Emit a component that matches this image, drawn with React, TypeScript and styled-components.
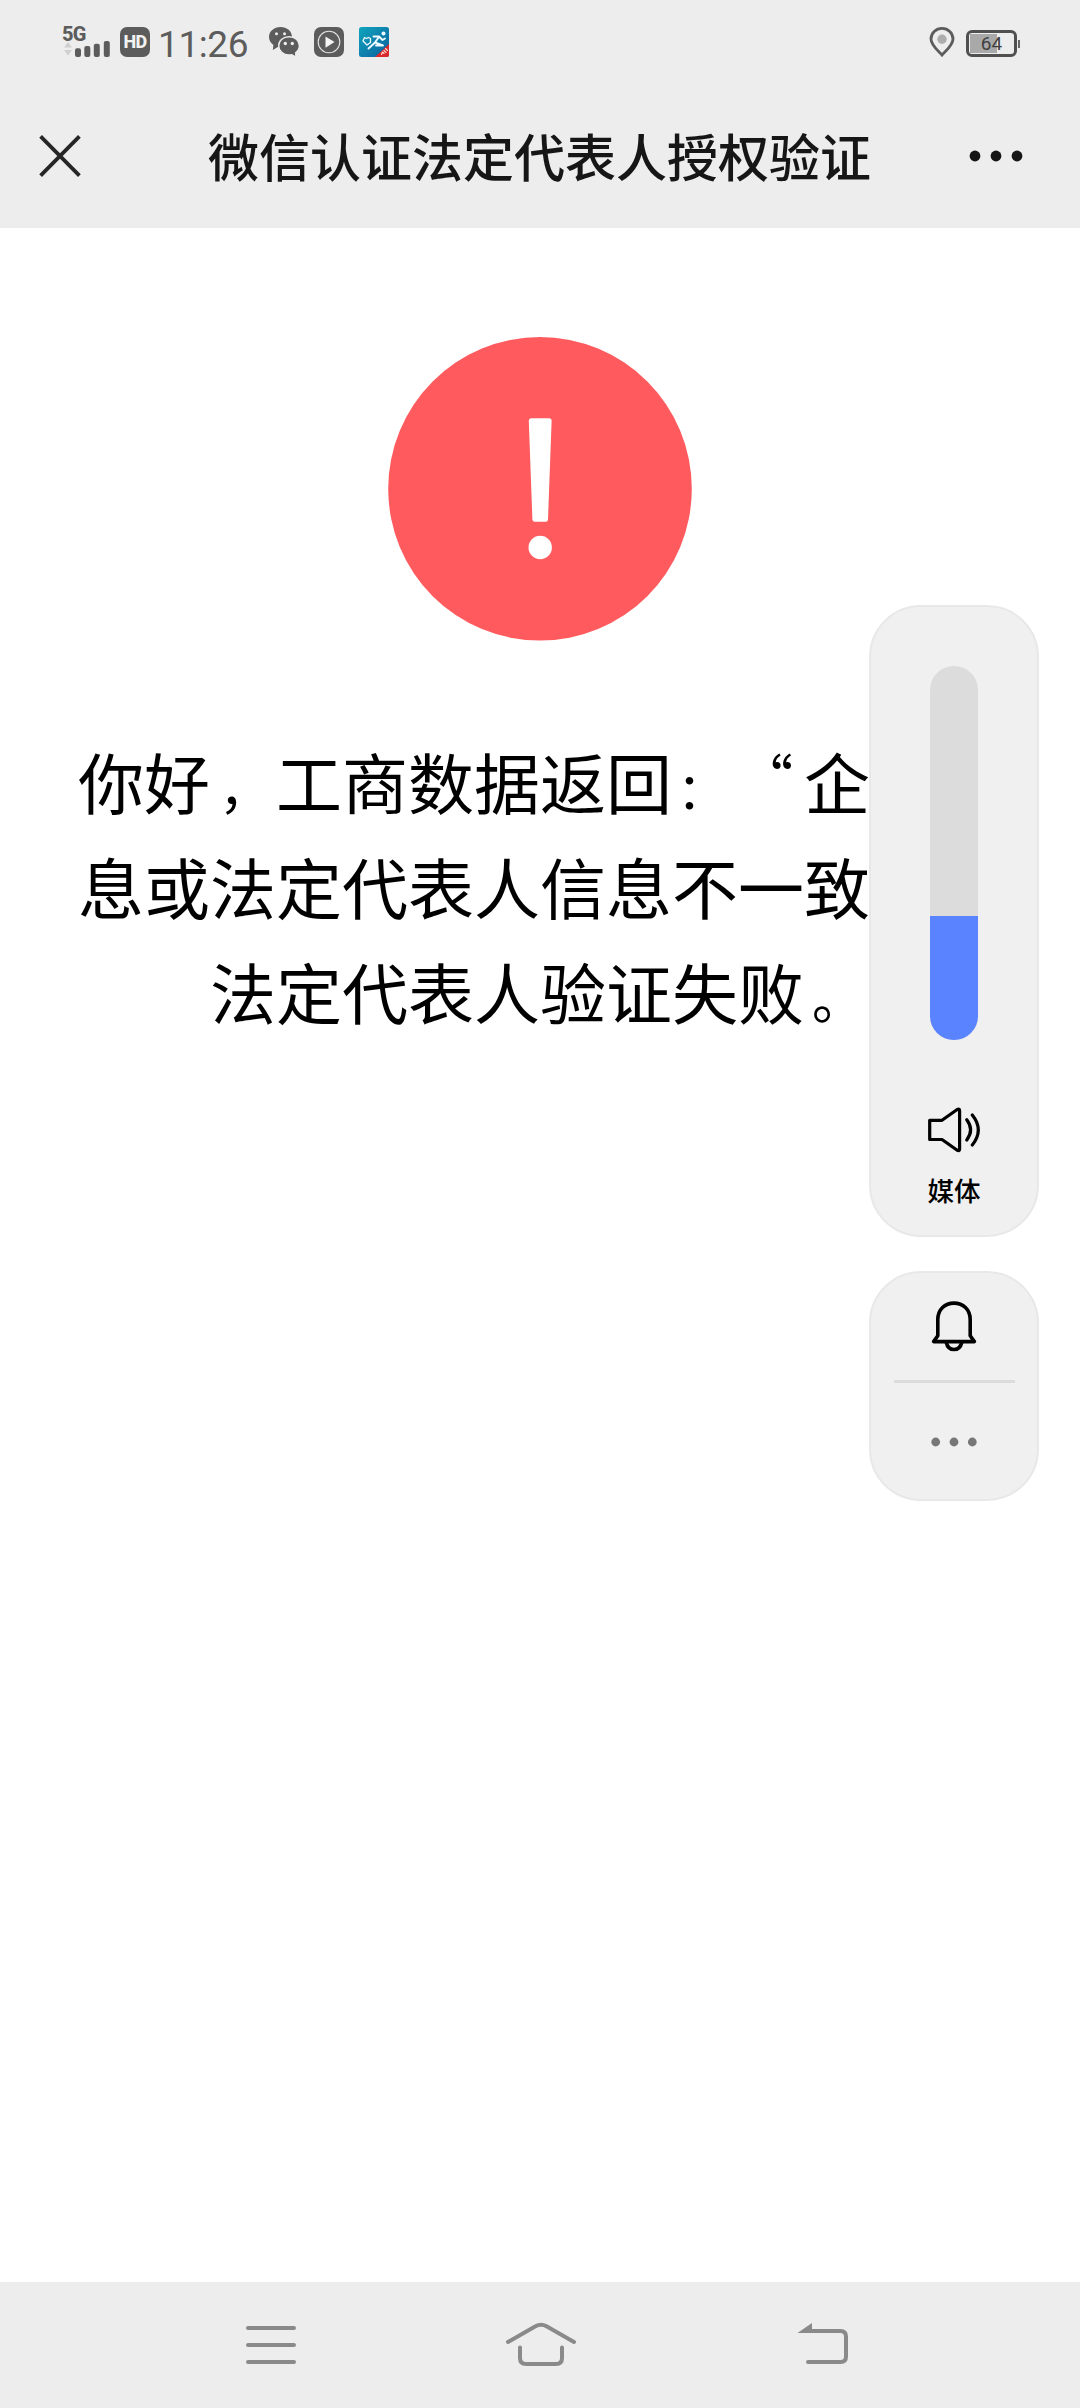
import React from 'react';
import styled, { createGlobalStyle } from 'styled-components';

const cjk = '"Noto Sans CJK SC", "Noto Sans", sans-serif';
const ink = '#5c5c5c';

const GlobalStyle = createGlobalStyle`
  * { box-sizing: border-box; }
  body { margin: 0; background: #fff; }
  svg { display: block; flex: none; }
`;

const Screen = styled.div`
  position: relative;
  display: flex;
  flex-direction: column;
  width: 1080px;
  height: 2408px;
  overflow: hidden;
  background: #fff;
  font-family: ${cjk};
`;

const StatusBar = styled.div`
  display: flex;
  justify-content: space-between;
  align-items: flex-start;
  height: 85px;
  padding: 27px 60px 0 62px;
  background: #ededed;
  color: ${ink};
`;

const StatusGroup = styled.div<{ $gap: number }>`
  display: flex;
  align-items: flex-start;
  gap: ${(p) => p.$gap}px;
  height: 30px;
`;

const Signal = styled.div`
  display: flex;
  flex-direction: column;
  width: 48px;
  height: 30px;
`;

const NetworkLabel = styled.span`
  height: 14px;
  font: 800 20px/15px Roboto, sans-serif;
  letter-spacing: -0.8px;
`;

const HdBadge = styled.div`
  display: flex;
  align-items: center;
  justify-content: center;
  width: 30px;
  height: 30px;
  margin-left: 10px;
  border-radius: 7px;
  background: ${ink};
  color: #f2f2f2;
  font: 800 18px/30px Roboto, sans-serif;
  letter-spacing: -0.6px;
`;

const Clock = styled.span`
  width: 94px;
  margin-left: 8px;
  font: 400 37px/36px Roboto, sans-serif;
  letter-spacing: -0.4px;
  white-space: nowrap;
`;

const StatusApps = styled.div`
  display: flex;
  gap: 15px;
  margin-left: 17px;
`;

const Battery = styled.div`
  display: flex;
  align-items: center;
  gap: 1px;
  margin-top: 3px;
`;

const BatteryCell = styled.div`
  display: flex;
  align-items: center;
  justify-content: center;
  width: 51px;
  height: 27px;
  border: 3px solid #505050;
  border-radius: 6px;
  background: linear-gradient(90deg, #a9a9a9 27px, transparent 27px) 1px 1px / 43px 19px no-repeat;
  color: #404040;
  font: 400 19px/21px Roboto, sans-serif;
`;

const BatteryTip = styled.div`
  width: 2px;
  height: 8px;
  background: #666;
`;

const Header = styled.header`
  display: grid;
  grid-template-columns: 170px 1fr 54px;
  align-items: center;
  height: 143px;
  padding: 0 57px 1px 38px;
  background: #ededed;
`;

const Title = styled.h1`
  margin: 0 0 3px;
  color: #161616;
  font-size: 51px;
  font-weight: 500;
  line-height: 76px;
  white-space: nowrap;
`;

const Content = styled.main`
  display: flex;
  flex: 1;
  flex-direction: column;
  align-items: center;
  padding: 109px 78px 0;
`;

const Message = styled.div`
  width: 924px;
  margin-top: 87px;
  color: #000;
  font-size: 66px;
  line-height: 105px;
`;

const MessageLine = styled.p<{ $centered?: boolean }>`
  height: 105px;
  margin: 0;
  text-align: ${(p) => (p.$centered ? 'center' : 'left')};
  white-space: nowrap;
`;

const Punct = styled.span<{ $size: number; $indent: number; $raise?: number }>`
  display: inline-block;
  width: 66px;
  font-size: ${(p) => p.$size}px;
  line-height: 60px;
  text-align: left;
  text-indent: ${(p) => p.$indent}px;
  text-spacing-trim: space-all;
  vertical-align: ${(p) => p.$raise ?? 0}px;
`;

const VolumeOverlay = styled.aside`
  position: absolute;
  top: 605px;
  right: 41px;
  display: flex;
  flex-direction: column;
  gap: 34px;
  width: 170px;
`;

const Panel = styled.section<{ $height: number; $top: number }>`
  display: flex;
  flex-direction: column;
  align-items: center;
  height: ${(p) => p.$height}px;
  padding-top: ${(p) => p.$top}px;
  border: 2px solid #e8e8e8;
  border-radius: 52px;
  background: #f0f0f0;
`;

const Track = styled.div`
  display: flex;
  flex-direction: column;
  justify-content: flex-end;
  width: 48px;
  height: 374px;
  margin-bottom: 67px;
  overflow: hidden;
  border-radius: 24px;
  background: #dcdcdc;
`;

const Level = styled.div`
  height: 124px;
  background: #5a84ff;
`;

const StreamLabel = styled.span`
  margin-top: 17px;
  color: #000;
  font-size: 26.5px;
  font-weight: 500;
  line-height: 40px;
`;

const Divider = styled.div`
  width: 121px;
  height: 3px;
  margin: 28px 0 52px;
  background: #dcdcdc;
`;

const NavBar = styled.nav`
  display: grid;
  grid-template-columns: 260px 293px 54px;
  height: 126px;
  padding: 38px 0 0 244px;
  background: #ededed;
`;

function SignalBars() {
  return (
    <svg width="48" height="16" viewBox="0 0 48 16">
      <path d="M2 6.5 6 1l4 5.5zM2 9l4 5.5L10 9z" fill="#cfcfcf" />
      <g fill={ink}>
        <rect x="13" y="7.3" width="6" height="8.7" rx="2" />
        <rect x="22.3" y="5" width="6" height="11" rx="2" />
        <rect x="31.8" y="2.7" width="6" height="13.3" rx="2" />
        <rect x="41.8" y="0" width="6" height="16" rx="2" />
      </g>
    </svg>
  );
}

function WeChatIcon() {
  return (
    <svg width="30" height="30" viewBox="0 0 30 30">
      <path d="M11.5 0C5 0 0 4.400 0 10c0 3.300 1.700 6 4.400 7.900L3.800 23l5-3.100c.9.200 1.800.3 2.700.3C18 20.200 23 15.700 23 10S18 0 11.500 0z" fill={ink} />
      <path d="M20 9.700c5.800 0 10.400 4 10.400 9.100 0 2.900-1.500 5.300-3.800 7l.4 4.200-4.200-2.300c-.9.200-1.800.3-2.800.3-5.700 0-10.300-4.100-10.300-9.200 0-5.100 4.600-9.100 10.300-9.100z" fill={ink} stroke="#ededed" strokeWidth="1.400" />
      <g fill="#ededed">
        <circle cx="7.500" cy="6.800" r="1.500" />
        <circle cx="15.500" cy="6.800" r="1.500" />
        <circle cx="16.300" cy="16.500" r="1.700" />
        <circle cx="23.300" cy="16.500" r="1.700" />
      </g>
    </svg>
  );
}

function PlayerIcon() {
  return (
    <svg width="30" height="30" viewBox="0 0 30 30">
      <rect width="30" height="30" rx="7" fill={ink} />
      <circle cx="15" cy="15" r="10.800" fill="none" stroke="#e4e4e4" strokeWidth="1.100" />
      <path d="M11.500 9.500v11.200l9-5.600z" fill="#f4f4f4" />
    </svg>
  );
}

function RunnerIcon() {
  return (
    <svg width="30" height="30" viewBox="0 0 30 30">
      <defs>
        <linearGradient id="sky" x1="0" y1="0" x2="1" y2="1">
          <stop offset="0" stopColor="#10a5bd" />
          <stop offset="1" stopColor="#0b5f9e" />
        </linearGradient>
        <clipPath id="tile"><rect width="30" height="30" rx="2.500" /></clipPath>
      </defs>
      <g clipPath="url(#tile)">
        <rect width="30" height="30" fill="url(#sky)" />
        <path d="M30 17v13H16z" fill="#d8292c" />
        <g fill="none" stroke="#eefaff" strokeLinecap="round" strokeLinejoin="round">
          <path d="M14.500 9.500h5.500l3.500 3.500 2.500-1.500M20 10l-4.500 6-6 5.500M16 15.500l8 3h-7" strokeWidth="1.900" />
          <path d="M11.500 11.500l-2-1-2 1-2-1L4 14l4 4 3.500-2.500z" strokeWidth="1.300" />
          <path d="M22.500 27.500l1-2.500 1.500 1.500m0-3 2 2m-.5-4 2 2" stroke="#ffd9cf" strokeWidth="1.100" />
        </g>
        <circle cx="24.500" cy="6.500" r="2" fill="#eefaff" />
      </g>
    </svg>
  );
}

function LocationIcon() {
  return (
    <svg width="26" height="30" viewBox="0 0 26 30">
      <path d="M13 28C10 24.500 2 18.500 2 12a11 10.600 0 0 1 22 0c0 6.500-8 12.500-11 16z" fill="none" stroke={ink} strokeWidth="2.800" />
      <circle cx="13" cy="12.300" r="4.700" fill="#adadad" />
    </svg>
  );
}

function CloseIcon() {
  return (
    <svg width="44" height="44" viewBox="0 0 44 44">
      <path d="M2.600 2.400 41.400 41.600M41.400 2.400 2.600 41.600" stroke="#262626" strokeWidth="3.800" />
    </svg>
  );
}

function Dots({ width, pitch, r, color }: { width: number; pitch: number; r: number; color: string }) {
  return (
    <svg width={width} height="14" viewBox={`${-width / 2} -7 ${width} 14`} fill={color}>
      {[-pitch, 0, pitch].map((cx) => <circle key={cx} cx={cx} cy="0" r={r} />)}
    </svg>
  );
}

function WarningIcon() {
  return (
    <svg width="304" height="304" viewBox="0 0 304 304">
      <circle cx="152" cy="151.800" r="151.800" fill="#ff5b5e" />
      <path d="M143.500 81.300h17.500q2.700 0 2.600 3l-3.600 98.200q-.1 2.300-2.300 2.300h-11q-2.200 0-2.300-2.300L140.800 84.300q-.1-3 2.700-3z" fill="#fff" />
      <circle cx="152.200" cy="210.500" r="11.700" fill="#fff" />
    </svg>
  );
}

function SpeakerIcon() {
  return (
    <svg width="54" height="46" viewBox="0 0 54 46" fill="none" stroke="#000" strokeWidth="3.200" strokeLinecap="round" strokeLinejoin="round">
      <path d="M2.700 13.300H15L30.200 2.500q2.400-1 2.400 1v38.800q0 2-2.400 1L15 32.500H2.700z" />
      <path d="M39.800 12.800q7.600 10 0 20.200M45.300 8q12 15 0 30" />
    </svg>
  );
}

function BellIcon() {
  return (
    <svg width="46" height="51" viewBox="0 0 46 51" fill="none" stroke="#000" strokeWidth="3.600" strokeLinejoin="round">
      <path d="M6.800 18.500C6.800 8.500 14 2.100 23 2.100s16.200 6.400 16.200 16.400v16.200l4.200 5.900H2.600l4.200-5.900z" />
      <path d="M15.300 41.500c1 4.600 4.200 7 7.700 7s6.700-2.400 7.700-7" />
    </svg>
  );
}

const navStroke = { fill: 'none', stroke: '#8a8a8a', strokeWidth: 4, strokeLinecap: 'round' as const };

function MenuIcon() {
  return (
    <svg width="54" height="48" viewBox="0 0 54 48" {...navStroke}>
      <path d="M4 8h46M4 25h46M4 42h46" />
    </svg>
  );
}

function HomeIcon() {
  return (
    <svg width="74" height="48" viewBox="0 0 74 48" {...navStroke}>
      <path d="M4 22 31.500 6.300q5.600-3 11 0L70 22" />
      <path d="M16 27.500V38q0 6 6 6h30q6 0 6-6V27.500" />
    </svg>
  );
}

function BackIcon() {
  return (
    <svg width="54" height="48" viewBox="0 0 54 48" {...navStroke}>
      <path d="M10 11h33.500q5.500 0 5.500 5.500v20q0 5.500-5.500 5.500H11" />
      <path d="M.5 13 15 3v10z" fill="#8a8a8a" stroke="none" />
    </svg>
  );
}

export default function App() {
  return (
    <Screen>
      <GlobalStyle />
      <StatusBar>
        <StatusGroup $gap={0}>
          <Signal>
            <NetworkLabel>5G</NetworkLabel>
            <SignalBars />
          </Signal>
          <HdBadge>HD</HdBadge>
          <Clock>11:26</Clock>
          <StatusApps>
            <WeChatIcon />
            <PlayerIcon />
            <RunnerIcon />
          </StatusApps>
        </StatusGroup>
        <StatusGroup $gap={11}>
          <LocationIcon />
          <Battery>
            <BatteryCell>64</BatteryCell>
            <BatteryTip />
          </Battery>
        </StatusGroup>
      </StatusBar>
      <Header>
        <CloseIcon />
        <Title>微信认证法定代表人授权验证</Title>
        <Dots width={54} pitch={21} r={5.4} color="#161616" />
      </Header>
      <Content>
        <WarningIcon />
        <Message>
          <MessageLine>
            你好<Punct $size={52} $indent={9}>，</Punct>工商数据返回<Punct $size={50} $indent={5}>：</Punct>
            <Punct $size={54} $indent={1} $raise={9}>“</Punct>企
          </MessageLine>
          <MessageLine>息或法定代表人信息不一致</MessageLine>
          <MessageLine $centered>
            法定代表人验证失败<Punct $size={52} $indent={8}>。</Punct>
          </MessageLine>
        </Message>
      </Content>
      <NavBar>
        <MenuIcon />
        <HomeIcon />
        <BackIcon />
      </NavBar>
      <VolumeOverlay>
        <Panel $height={632} $top={59}>
          <Track>
            <Level />
          </Track>
          <SpeakerIcon />
          <StreamLabel>媒体</StreamLabel>
        </Panel>
        <Panel $height={230} $top={28}>
          <BellIcon />
          <Divider />
          <Dots width={48} pitch={18.3} r={4.4} color="#777" />
        </Panel>
      </VolumeOverlay>
    </Screen>
  );
}
